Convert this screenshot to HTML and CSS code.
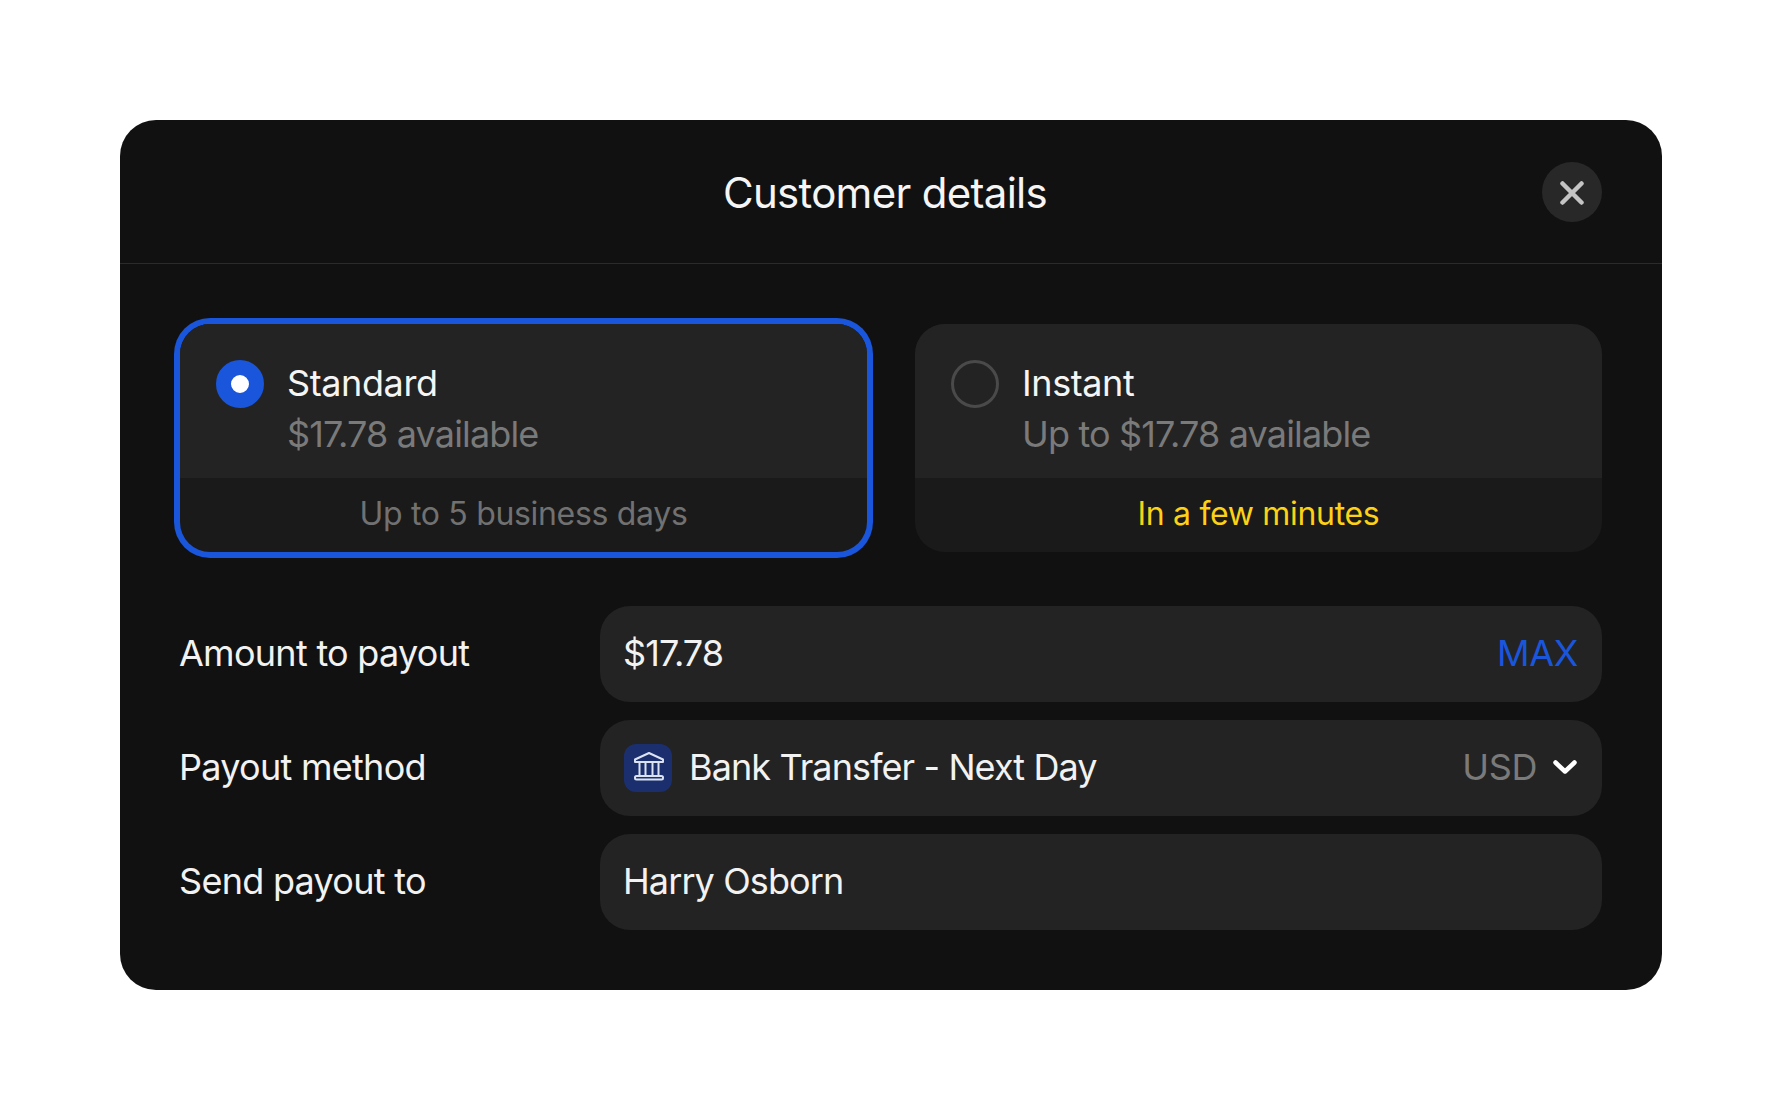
FILE: index.html
```html
<!DOCTYPE html>
<html lang="en">
<head>
<meta charset="utf-8">
<title>Customer details</title>
<link rel="stylesheet" href="styles.css">
</head>
<body>
<main class="modal">
  <header class="modal-header">
    <h1 class="modal-title">Customer details</h1>
    <button class="close-button" aria-label="Close">
      <svg class="close-icon" viewBox="0 0 24 24" fill="none"><path d="M2.5 2.5L21.5 21.5M21.5 2.5L2.5 21.5"/></svg>
    </button>
  </header>
  <div class="modal-body">
    <section class="options">
      <article class="option option-selected">
        <div class="option-main">
          <span class="radio radio-on"></span>
          <div class="option-text">
            <div class="option-name">Standard</div>
            <div class="option-sub">$17.78 available</div>
          </div>
        </div>
        <div class="option-foot">Up to 5 business days</div>
      </article>
      <article class="option">
        <div class="option-main">
          <span class="radio"></span>
          <div class="option-text">
            <div class="option-name">Instant</div>
            <div class="option-sub">Up to $17.78 available</div>
          </div>
        </div>
        <div class="option-foot option-foot-fast">In a few minutes</div>
      </article>
    </section>
    <section class="fields">
      <div class="field-label">Amount to payout</div>
      <div class="field">
        <span class="field-value">$17.78</span>
        <span class="max">MAX</span>
      </div>
      <div class="field-label">Payout method</div>
      <div class="field">
        <span class="bank-badge">
          <svg class="bank-icon" viewBox="0 0 48 48" fill="none"><path d="M25 9L39 15.5V18H11V15.5Z"/><path d="M15.5 18V32M21.5 18V32M28.5 18V32M34.5 18V32"/><rect x="11" y="32" width="28" height="3.5" rx="1.5"/></svg>
        </span>
        <span class="field-value">Bank Transfer - Next Day</span>
        <span class="currency">USD</span>
        <svg class="chevron" viewBox="0 0 24 24" fill="none"><path d="M2.5 6.5L12 15.5L21.5 6.5"/></svg>
      </div>
      <div class="field-label">Send payout to</div>
      <div class="field">
        <span class="field-value">Harry Osborn</span>
      </div>
    </section>
  </div>
</main>
</body>
</html>
```
FILE: styles.css
```css
* { box-sizing: border-box; }
html, body { margin: 0; padding: 0; }
body {
  background: #fff;
  padding: 120px;
  font-family: Inter, "Liberation Sans", sans-serif;
  color: #f2f2f2;
}
.modal {
  width: 1542px;
  height: 870px;
  background: #111112;
  border-radius: 36px;
}
.modal-header {
  height: 144px;
  border-bottom: 1px solid #2b2b2b;
  display: flex;
  align-items: center;
  justify-content: center;
  position: relative;
}
.modal-title {
  margin: 1px 12px 0 0;
  font-size: 42px;
  font-weight: 400;
  letter-spacing: -0.7px;
  color: #f5f5f5;
}
.close-button {
  position: absolute;
  right: 60px;
  top: 42px;
  width: 60px;
  height: 60px;
  border: 0;
  padding: 0;
  border-radius: 50%;
  background: #282828;
  display: flex;
  align-items: center;
  justify-content: center;
}
.close-icon { width: 24px; height: 24px; margin-top: 2px; }
.close-icon path { stroke: #c4c4c4; stroke-width: 4.5; stroke-linecap: round; }
.modal-body { padding: 60px 60px 0; }
.options {
  display: grid;
  grid-template-columns: 687px 687px;
  column-gap: 48px;
}
.option {
  height: 228px;
  border-radius: 30px;
  background: #1a1a1a;
  display: flex;
  flex-direction: column;
  overflow: hidden;
}
.option-selected { box-shadow: 0 0 0 6px #1a56db; }
.option-main {
  height: 154px;
  flex: none;
  background: #232323;
  padding: 36px;
  display: flex;
  gap: 24px;
}
.radio {
  flex: none;
  width: 48px;
  height: 48px;
  border-radius: 50%;
  border: 3px solid #4a4a4a;
}
.radio-on {
  border: 15px solid #1a56db;
  background: #fff;
}
.option-text { margin: -3px 0 0 -1px; }
.option-name {
  font-size: 36px;
  line-height: 52px;
  letter-spacing: -0.4px;
  color: #f5f5f5;
}
.option-sub {
  font-size: 36px;
  line-height: 50px;
  letter-spacing: -0.85px;
  color: #7a7a7a;
}
.option-foot {
  flex: 1;
  display: flex;
  align-items: center;
  justify-content: center;
  padding-bottom: 4px;
  font-size: 32px;
  letter-spacing: -0.32px;
  color: #717171;
}
.option-foot-fast { color: #fcd116; }
.fields {
  margin-top: 54px;
  display: grid;
  grid-template-columns: 420px 1002px;
  row-gap: 18px;
}
.field-label {
  display: flex;
  align-items: center;
  padding-bottom: 2px;
  margin-left: -1px;
  font-size: 36px;
  letter-spacing: -0.72px;
  color: #f2f2f2;
}
.field {
  height: 96px;
  background: #232323;
  border-radius: 30px;
  padding: 0 24px;
  display: flex;
  align-items: center;
}
.field-value {
  margin: -2px 0 0 -1px;
  font-size: 36px;
  letter-spacing: -0.9px;
  color: #f2f2f2;
}
.max {
  margin: -2px 0 0 auto;
  font-size: 36px;
  letter-spacing: -0.3px;
  color: #1a56db;
}
.bank-badge {
  width: 48px;
  height: 48px;
  margin-right: 18px;
  border-radius: 12px;
  background: #1b2f6e;
  flex: none;
}
.bank-icon { display: block; width: 48px; height: 48px; }
.bank-icon path, .bank-icon rect { stroke: #dbe3f3; stroke-width: 2; stroke-linejoin: round; }
.currency {
  margin: -2px 16px 0 auto;
  font-size: 36px;
  letter-spacing: -0.4px;
  color: #7a7a7a;
}
.chevron { width: 24px; height: 24px; margin-right: 1px; flex: none; }
.chevron path { stroke: #fff; stroke-width: 4.5; stroke-linecap: round; stroke-linejoin: round; }
```
